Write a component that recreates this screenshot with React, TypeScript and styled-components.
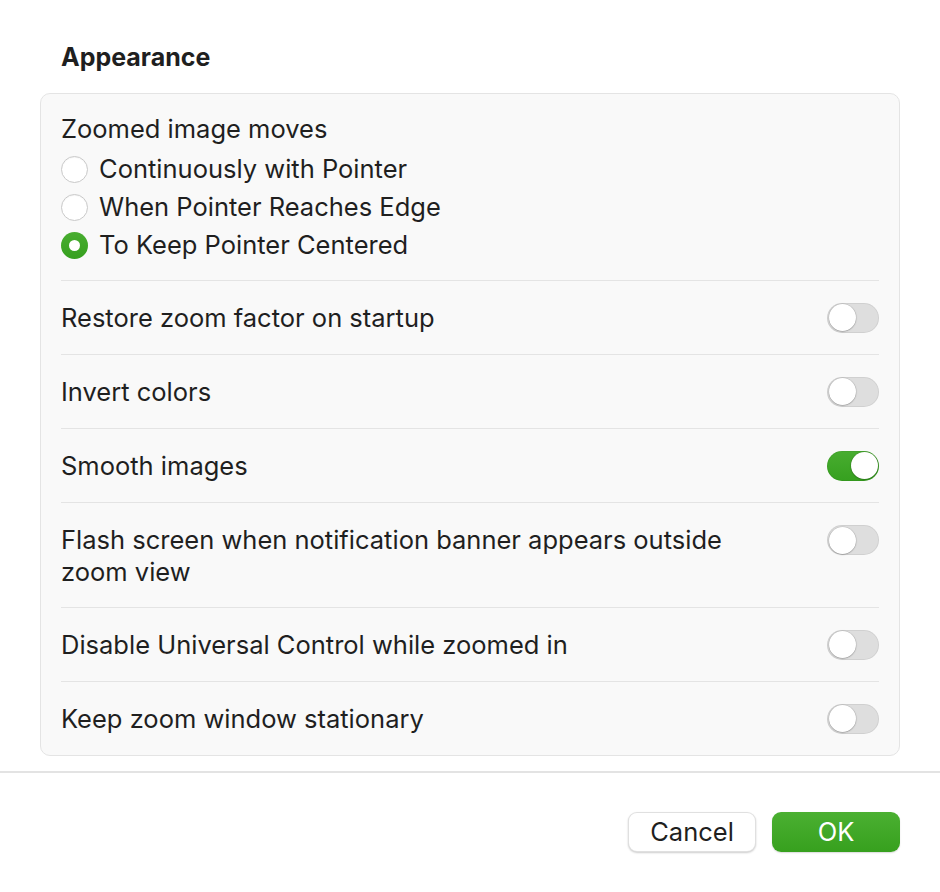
import React from "react";
import styled, { createGlobalStyle } from "styled-components";

const Global = createGlobalStyle`
  html, body { margin: 0; padding: 0; background: #ffffff; }
  body { font-family: Inter, "Noto Sans", "Liberation Sans", sans-serif; color: #1f1f1f; -webkit-font-smoothing: antialiased; }
`;

const Window = styled.div`
  width: 940px;
  height: 892px;
  background: #ffffff;
  display: flex;
  flex-direction: column;
`;

const Content = styled.div`
  padding: 40px 40px 15px 40px;
  display: flex;
  flex-direction: column;
`;

const Heading = styled.h2`
  margin: 0 0 19px 21px;
  font-size: 25px;
  line-height: 34px;
  font-weight: 700;
  color: #1f1f1f;
`;

const Card = styled.div`
  background: #f9f9f9;
  border: 1px solid #e4e4e4;
  border-radius: 10px;
  padding: 0 20px;
  display: flex;
  flex-direction: column;
`;

const RadioSection = styled.div`
  padding: 19px 0 16px;
  display: flex;
  flex-direction: column;
`;

const Label = styled.div`
  font-size: 25.5px;
  line-height: 32px;
  color: #1f1f1f;
`;

const RadioList = styled.div`
  display: flex;
  flex-direction: column;
  margin-top: 5px;
`;

const RadioRow = styled.div`
  display: flex;
  align-items: center;
  gap: 11px;
  height: 38px;
`;

const RadioDot = styled.span<{ $on?: boolean }>`
  width: 27px;
  height: 27px;
  border-radius: 50%;
  box-sizing: border-box;
  flex: none;
  display: flex;
  align-items: center;
  justify-content: center;
  background: ${(p) => (p.$on ? "linear-gradient(#48ad30, #36a01f)" : "#ffffff")};
  border: ${(p) => (p.$on ? "none" : "1px solid #c9c9c9")};
  box-shadow: ${(p) => (p.$on ? "none" : "inset 0 1px 1px rgba(0,0,0,0.04)")};
  &::after {
    content: "";
    display: ${(p) => (p.$on ? "block" : "none")};
    width: 11px;
    height: 11px;
    border-radius: 50%;
    background: #ffffff;
  }
`;

const Row = styled.div<{ $tall?: boolean }>`
  display: flex;
  justify-content: space-between;
  align-items: ${(p) => (p.$tall ? "flex-start" : "center")};
  border-top: 1px solid #e4e4e4;
  min-height: ${(p) => (p.$tall ? "105px" : "74px")};
  box-sizing: border-box;
  padding: ${(p) => (p.$tall ? "21px 0 0" : "0")};
`;

const RowText = styled(Label)`
  max-width: 700px;
`;

const Toggle = styled.span<{ $on?: boolean }>`
  width: 52px;
  height: 30px;
  border-radius: 15px;
  flex: none;
  box-sizing: border-box;
  position: relative;
  background: ${(p) => (p.$on ? "linear-gradient(#48ad30, #36a01f)" : "#dedede")};
  box-shadow: inset 0 0 0 1px ${(p) => (p.$on ? "rgba(0,0,0,0.05)" : "rgba(0,0,0,0.06)")};
  &::after {
    content: "";
    position: absolute;
    top: 1.5px;
    left: ${(p) => (p.$on ? "23.5px" : "1.5px")};
    width: 27px;
    height: 27px;
    border-radius: 50%;
    background: #ffffff;
    box-shadow: 0 0.5px 1.5px rgba(0,0,0,0.35), 0 0 0 0.5px rgba(0,0,0,0.08);
  }
`;

const TallToggle = styled(Toggle)`
  margin-top: 1px;
`;

const Divider = styled.div`
  height: 2px;
  background: #e3e3e3;
`;

const Footer = styled.div`
  display: flex;
  justify-content: flex-end;
  gap: 16px;
  padding: 39px 40px 0;
`;

const Button = styled.button<{ $primary?: boolean }>`
  width: 128px;
  height: 40px;
  border-radius: 9px;
  font-family: inherit;
  font-size: 25.5px;
  line-height: 1;
  cursor: pointer;
  color: ${(p) => (p.$primary ? "#ffffff" : "#1f1f1f")};
  background: ${(p) => (p.$primary ? "linear-gradient(#4bb032, #37a01e)" : "#ffffff")};
  border: ${(p) => (p.$primary ? "none" : "1px solid rgba(0,0,0,0.12)")};
  box-shadow: ${(p) => (p.$primary ? "0 1px 1.5px rgba(0,0,0,0.15)" : "0 1px 2px rgba(0,0,0,0.2)")};
`;

const options = [
  { label: "Continuously with Pointer", on: false },
  { label: "When Pointer Reaches Edge", on: false },
  { label: "To Keep Pointer Centered", on: true },
];

const settings = [
  { label: "Restore zoom factor on startup", on: false },
  { label: "Invert colors", on: false },
  { label: "Smooth images", on: true },
  { label: "Flash screen when notification banner appears outside zoom view", on: false, tall: true },
  { label: "Disable Universal Control while zoomed in", on: false },
  { label: "Keep zoom window stationary", on: false },
];

export default function App() {
  return (
    <Window>
      <Global />
      <Content>
        <Heading>Appearance</Heading>
        <Card>
          <RadioSection>
            <Label>Zoomed image moves</Label>
            <RadioList>
              {options.map((o) => (
                <RadioRow key={o.label}>
                  <RadioDot $on={o.on} />
                  <Label>{o.label}</Label>
                </RadioRow>
              ))}
            </RadioList>
          </RadioSection>
          {settings.map((s) => (
            <Row key={s.label} $tall={s.tall}>
              <RowText>{s.label}</RowText>
              {s.tall ? <TallToggle $on={s.on} /> : <Toggle $on={s.on} />}
            </Row>
          ))}
        </Card>
      </Content>
      <Divider />
      <Footer>
        <Button>Cancel</Button>
        <Button $primary>OK</Button>
      </Footer>
    </Window>
  );
}
